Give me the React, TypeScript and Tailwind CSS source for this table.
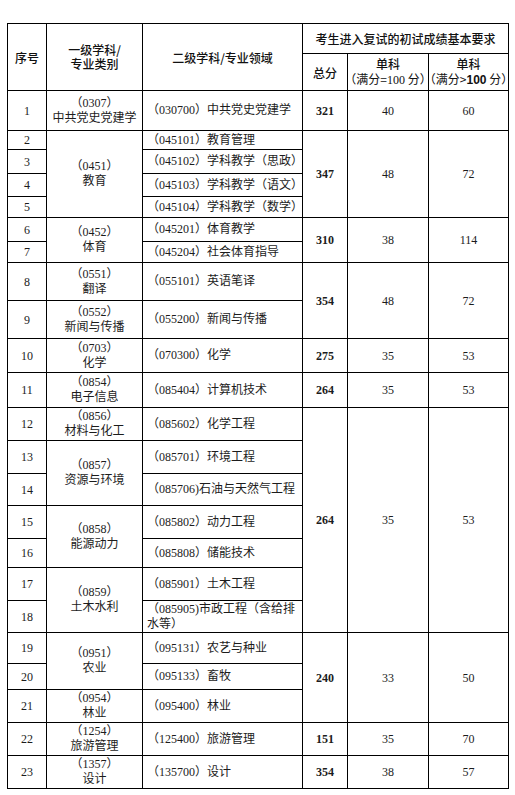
import React from "react";

type Row = {
  no: number;
  major?: { span: number; code: string; name: string };
  field: React.ReactNode;
  score?: { span: number; total: string; a: string; b: string };
};

const spanClass: Record<number, string> = {
  1: "",
  2: "row-span-2",
  3: "row-span-3",
  4: "row-span-4",
  7: "row-span-7",
};

const rows: Row[] = [
  { no: 1, major: { span: 1, code: "0307", name: "中共党史党建学" }, field: "（030700）中共党史党建学", score: { span: 1, total: "321", a: "40", b: "60" } },
  { no: 2, major: { span: 4, code: "0451", name: "教育" }, field: "（045101）教育管理", score: { span: 4, total: "347", a: "48", b: "72" } },
  { no: 3, field: "（045102）学科教学（思政）" },
  { no: 4, field: "（045103）学科教学（语文）" },
  { no: 5, field: "（045104）学科教学（数学）" },
  { no: 6, major: { span: 2, code: "0452", name: "体育" }, field: "（045201）体育教学", score: { span: 2, total: "310", a: "38", b: "114" } },
  { no: 7, field: "（045204）社会体育指导" },
  { no: 8, major: { span: 1, code: "0551", name: "翻译" }, field: "（055101）英语笔译", score: { span: 2, total: "354", a: "48", b: "72" } },
  { no: 9, major: { span: 1, code: "0552", name: "新闻与传播" }, field: "（055200）新闻与传播" },
  { no: 10, major: { span: 1, code: "0703", name: "化学" }, field: "（070300）化学", score: { span: 1, total: "275", a: "35", b: "53" } },
  { no: 11, major: { span: 1, code: "0854", name: "电子信息" }, field: "（085404）计算机技术", score: { span: 1, total: "264", a: "35", b: "53" } },
  { no: 12, major: { span: 1, code: "0856", name: "材料与化工" }, field: "（085602）化学工程", score: { span: 7, total: "264", a: "35", b: "53" } },
  { no: 13, major: { span: 2, code: "0857", name: "资源与环境" }, field: "（085701）环境工程" },
  { no: 14, field: "（085706)石油与天然气工程" },
  { no: 15, major: { span: 2, code: "0858", name: "能源动力" }, field: "（085802）动力工程" },
  { no: 16, field: "（085808）储能技术" },
  { no: 17, major: { span: 2, code: "0859", name: "土木水利" }, field: "（085901）土木工程" },
  {
    no: 18,
    field: (
      <>
        （085905)市政工程（含给排
        <br />
        水等）
      </>
    ),
  },
  { no: 19, major: { span: 2, code: "0951", name: "农业" }, field: "（095131）农艺与种业", score: { span: 3, total: "240", a: "33", b: "50" } },
  { no: 20, field: "（095133）畜牧" },
  { no: 21, major: { span: 1, code: "0954", name: "林业" }, field: "（095400）林业" },
  { no: 22, major: { span: 1, code: "1254", name: "旅游管理" }, field: "（125400）旅游管理", score: { span: 1, total: "151", a: "35", b: "70" } },
  { no: 23, major: { span: 1, code: "1357", name: "设计" }, field: "（135700）设计", score: { span: 1, total: "354", a: "38", b: "57" } },
];

const cell = "border-r border-b border-black flex items-center justify-center text-center";
const head = "font-['Noto_Sans_CJK_SC','Noto_Sans',sans-serif] font-medium text-[12px] leading-[13px] text-[#111]";

export default function App() {
  return (
    <div className="min-h-[795px] bg-white pl-[7px] pt-[23px] font-['Liberation_Serif','Noto_Sans_CJK_SC',serif] text-[12px] text-[#1c1c1c]">
      <div className="grid w-max border-l border-t border-black grid-cols-[39px_96px_160px_45px_81px_80px] grid-rows-[30px_37px_40px_19px_24px_23px_21px_24px_21px_38px_38px_34px_35px_33px_33px_32px_33px_29px_33px_32px_31px_26px_33px_33px_33px]">
        {/* header */}
        <div className={`${cell} ${head} row-span-2`}>序号</div>
        <div className={`${cell} ${head} row-span-2`}>
          <span className="max-w-[60px] leading-[14px]">一级学科/专业类别</span>
        </div>
        <div className={`${cell} ${head} row-span-2`}>二级学科/专业领域</div>
        <div className={`${cell} ${head} col-span-3`}>考生进入复试的初试成绩基本要求</div>
        <div className={`${cell} ${head}`}>总分</div>
        <div className={`${cell} ${head} flex-col gap-[2px]`}>
          <span>单科</span>
          <span className="whitespace-nowrap font-normal [font-feature-settings:'halt']">
            （满分=<span className="font-['Liberation_Serif']">100</span> 分）
          </span>
        </div>
        <div className={`${cell} ${head} flex-col gap-[2px]`}>
          <span>单科</span>
          <span className="whitespace-nowrap font-normal [font-feature-settings:'halt']">
            （满分&gt;<span className="font-['Liberation_Sans'] font-bold">100</span> 分）
          </span>
        </div>

        {/* body */}
        {rows.map((r) => (
          <React.Fragment key={r.no}>
            <div className={cell}>{r.no}</div>
            {r.major && (
              <div className={`${cell} ${spanClass[r.major.span]} flex-col leading-[15px]`}>
                <span>（{r.major.code}）</span>
                <span className="whitespace-nowrap">{r.major.name}</span>
              </div>
            )}
            <div className="border-r border-b border-black flex items-center pl-1 whitespace-nowrap leading-[15px]">
              <span>{r.field}</span>
            </div>
            {r.score && (
              <>
                <div className={`${cell} ${spanClass[r.score.span]} font-bold`}>{r.score.total}</div>
                <div className={`${cell} ${spanClass[r.score.span]}`}>{r.score.a}</div>
                <div className={`${cell} ${spanClass[r.score.span]}`}>{r.score.b}</div>
              </>
            )}
          </React.Fragment>
        ))}
      </div>
    </div>
  );
}
